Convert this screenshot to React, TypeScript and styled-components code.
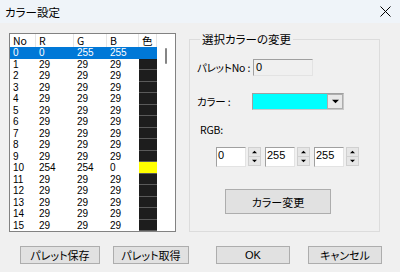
import React from "react";
import styled, { createGlobalStyle } from "styled-components";

const GlobalStyle = createGlobalStyle`
  html, body { margin: 0; padding: 0; background: #f0f0f0; }
  body {
    font-family: "Liberation Sans", "Noto Sans CJK JP", sans-serif;
    font-size: 11px;
    color: #000;
  }
  * { box-sizing: border-box; }
`;

const jp = `"Noto Sans CJK JP", "Liberation Sans", sans-serif`;

const Window = styled.div`
  width: 400px;
  height: 272px;
  background: #f0f0f0;
  display: flex;
  flex-direction: column;
  overflow: hidden;
`;

const TitleBar = styled.div`
  height: 23px;
  background: #eff4f9;
  display: flex;
  align-items: center;
  justify-content: space-between;
  padding: 0 9px 0 5px;
`;

const Title = styled.span`
  font-family: ${jp};
  font-size: 11.5px;
  font-feature-settings: "palt" 1;
  line-height: 14px;
`;

const CloseIcon = styled.svg`
  width: 11px;
  height: 11px;
  display: block;
`;

const Body = styled.div`
  padding: 10px 0 0 9px;
  display: flex;
  flex-direction: column;
`;

const TopRow = styled.div`
  display: flex;
  align-items: flex-start;
`;

const ListBox = styled.div`
  position: relative;
  width: 167px;
  height: 199px;
  border: 1px solid #828282;
  background: #fff;
  overflow: hidden;
`;

const Grid = styled.div`
  display: grid;
  grid-template-columns: 26px 38px 33px 32px 18px;
  grid-auto-rows: 11.5px;
  grid-template-rows: 13px;
  width: 147px;
`;

const HeadCell = styled.div`
  line-height: 13px;
  padding-left: 3px;
  border-right: 1px solid #e5e5e5;
  font-family: ${jp};
  font-size: 10.5px;
  white-space: nowrap;
`;

const Cell = styled.div<{ $sel?: boolean; $swatch?: string }>`
  line-height: 11.5px;
  padding-left: 3px;
  font-size: 10px;
  white-space: nowrap;
  color: ${(p) => (p.$sel ? "#fff" : "#000")};
  background: ${(p) => (p.$sel ? "#0078d7" : p.$swatch ? p.$swatch : "#fff")};
  box-shadow: ${(p) => (p.$swatch && !p.$sel ? "inset 0 -1px 0 #5a5a5a" : "none")};
`;

const ScrollThumb = styled.div`
  position: absolute;
  left: 155px;
  top: 14px;
  width: 2px;
  height: 16px;
  border-radius: 1px;
  background: #858585;
`;

const GroupBox = styled.fieldset`
  margin: -1px 0 0 13px;
  padding: 0 0 0 7px;
  width: 191px;
  height: 200px;
  border: 1px solid #dcdcdc;
  min-width: 0;
`;

const Legend = styled.legend`
  margin-left: 3px;
  padding: 0 2px;
  font-family: ${jp};
  font-size: 11.5px;
  font-feature-settings: "palt" 1;
  line-height: 14px;
`;

const FieldRow = styled.div<{ $top: number }>`
  display: flex;
  align-items: center;
  margin-top: ${(p) => p.$top}px;
`;

const Label = styled.span<{ $w?: number; $indent?: number }>`
  width: ${(p) => (p.$w ? `${p.$w}px` : "auto")};
  margin-left: ${(p) => p.$indent ?? 0}px;
  font-family: ${jp};
  font-size: 10.5px;
  letter-spacing: -0.2px;
  font-feature-settings: "palt" 1;
  line-height: 13px;
  white-space: nowrap;
`;

const ReadOnlyBox = styled.div`
  width: 60px;
  height: 17px;
  background: #f0f0f0;
  border-top: 1px solid #a0a0a0;
  border-left: 1px solid #a0a0a0;
  border-right: 1px solid #e3e3e3;
  border-bottom: 1px solid #e3e3e3;
  padding-left: 2px;
  line-height: 15px;
  font-size: 11px;
`;

const Combo = styled.div`
  width: 92px;
  height: 17px;
  display: flex;
  border: 1px solid #a0a0a0;
  border-right-color: #c8c8c8;
  border-bottom-color: #c8c8c8;
  background: #00ffff;
`;

const ComboFill = styled.div`
  flex: 1;
`;

const ComboButton = styled.div`
  width: 16px;
  height: 15px;
  background: #e8e8e8;
  border: 1px solid #adadad;
  display: flex;
  align-items: center;
  justify-content: center;
`;

const SpinRow = styled.div`
  display: flex;
  margin: 11px 0 0 19px;
`;

const SpinBox = styled.div`
  width: 30px;
  height: 20px;
  background: #fff;
  border-top: 1px solid #a0a0a0;
  border-left: 1px solid #a0a0a0;
  border-right: 1px solid #e3e3e3;
  border-bottom: 1px solid #e3e3e3;
  padding-left: 1px;
  line-height: 15px;
  font-size: 11px;
`;

const Spinner = styled.div`
  width: 13px;
  height: 19px;
  margin: 0 4px 0 2px;
  display: flex;
  flex-direction: column;
  background: #e6e6e6;
  border: 1px solid #d0d0d0;
`;

const SpinHalf = styled.div`
  flex: 1;
  display: flex;
  align-items: center;
  justify-content: center;
  & + & { border-top: 1px solid #d0d0d0; }
`;

const Button = styled.div<{ $w: number; $h?: number; $ml?: number }>`
  width: ${(p) => p.$w}px;
  height: ${(p) => p.$h ?? 18}px;
  margin-left: ${(p) => p.$ml ?? 0}px;
  background: #e1e1e1;
  border: 1px solid #adadad;
  display: flex;
  align-items: center;
  justify-content: center;
  font-family: ${jp};
  font-size: 11px;
  font-feature-settings: "palt" 1;
  white-space: nowrap;
`;

const OkText = styled.span`
  font-family: "Liberation Sans", sans-serif;
  font-size: 11px;
`;

const ChangeButtonWrap = styled.div`
  margin: 22px 0 0 28px;
`;

const ButtonRow = styled.div`
  display: flex;
  margin-top: 14px;
`;

const Tri = ({ up, size = 5 }: { up?: boolean; size?: number }) => (
  <svg width={size} height={Math.ceil(size / 2) + 1} viewBox="0 0 6 4" style={{ display: "block" }}>
    <polygon points={up ? "3,0.5 0,3.5 6,3.5" : "0,0.5 6,0.5 3,3.5"} fill="#000" />
  </svg>
);

type Row = { no: number; r: number; g: number; b: number; color: string };

const rows: Row[] = Array.from({ length: 16 }, (_, i) => {
  if (i === 0) return { no: 0, r: 0, g: 255, b: 255, color: "#00ffff" };
  if (i === 10) return { no: 10, r: 254, g: 254, b: 0, color: "#ffff00" };
  return { no: i, r: 29, g: 29, b: 29, color: "#1d1d1d" };
});

export default function App() {
  return (
    <Window>
      <GlobalStyle />
      <TitleBar>
        <Title>カラー設定</Title>
        <CloseIcon viewBox="0 0 11 11">
          <path d="M0.5 0.5 L10.5 10.5 M10.5 0.5 L0.5 10.5" stroke="#000" strokeWidth="1" />
        </CloseIcon>
      </TitleBar>
      <Body>
        <TopRow>
          <ListBox>
            <Grid>
              <HeadCell>No</HeadCell>
              <HeadCell>R</HeadCell>
              <HeadCell>G</HeadCell>
              <HeadCell>B</HeadCell>
              <HeadCell>色</HeadCell>
              {rows.map((r) => {
                const sel = r.no === 0;
                return (
                  <React.Fragment key={r.no}>
                    <Cell $sel={sel}>{r.no}</Cell>
                    <Cell $sel={sel}>{r.r}</Cell>
                    <Cell $sel={sel}>{r.g}</Cell>
                    <Cell $sel={sel}>{r.b}</Cell>
                    <Cell $sel={sel} $swatch={r.color} />
                  </React.Fragment>
                );
              })}
            </Grid>
            <ScrollThumb />
          </ListBox>
          <GroupBox>
            <Legend>選択カラーの変更</Legend>
            <FieldRow $top={13}>
              <Label $w={56}>パレットNo :</Label>
              <ReadOnlyBox>0</ReadOnlyBox>
            </FieldRow>
            <FieldRow $top={17}>
              <Label $w={55}>カラー :</Label>
              <Combo>
                <ComboFill />
                <ComboButton>
                  <Tri size={7} />
                </ComboButton>
              </Combo>
            </FieldRow>
            <FieldRow $top={13}>
              <Label $indent={3}>RGB:</Label>
            </FieldRow>
            <SpinRow>
              {["0", "255", "255"].map((v, i) => (
                <React.Fragment key={i}>
                  <SpinBox>{v}</SpinBox>
                  <Spinner>
                    <SpinHalf>
                      <Tri up size={5} />
                    </SpinHalf>
                    <SpinHalf>
                      <Tri size={5} />
                    </SpinHalf>
                  </Spinner>
                </React.Fragment>
              ))}
            </SpinRow>
            <ChangeButtonWrap>
              <Button $w={106} $h={25}>カラー変更</Button>
            </ChangeButtonWrap>
          </GroupBox>
        </TopRow>
        <ButtonRow>
          <Button $w={80} $ml={11}>パレット保存</Button>
          <Button $w={76} $ml={13}>パレット取得</Button>
          <Button $w={74} $ml={27}>
            <OkText>OK</OkText>
          </Button>
          <Button $w={74} $ml={18}>キャンセル</Button>
        </ButtonRow>
      </Body>
    </Window>
  );
}
